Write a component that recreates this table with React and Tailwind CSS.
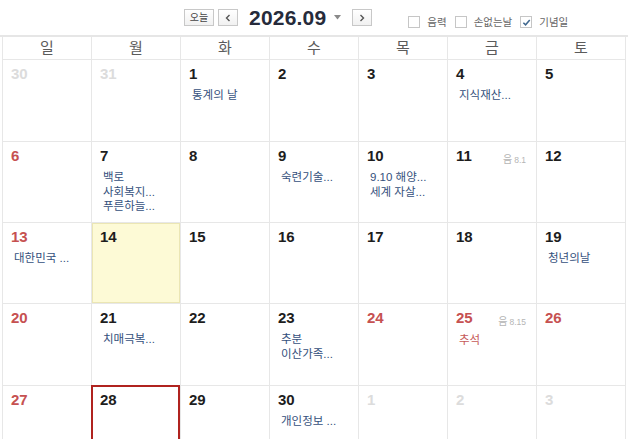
const weekdays = ['일', '월', '화', '수', '목', '금', '토'];

// o: other month, red: holiday/sunday, today, sel: selected
const weeks = [
  [
    { d: 30, o: true }, { d: 31, o: true }, { d: 1, ev: ['통계의 날'] }, { d: 2 },
    { d: 3 }, { d: 4, ev: ['지식재산...'] }, { d: 5 },
  ],
  [
    { d: 6, red: true }, { d: 7, ev: ['백로', '사회복지...', '푸른하늘...'] }, { d: 8 },
    { d: 9, ev: ['숙련기술...'] }, { d: 10, ev: ['9.10 해양...', '세계 자살...'] },
    { d: 11, lunar: '8.1' }, { d: 12 },
  ],
  [
    { d: 13, red: true, ev: ['대한민국 ...'] }, { d: 14, today: true }, { d: 15 }, { d: 16 },
    { d: 17 }, { d: 18 }, { d: 19, ev: ['청년의날'] },
  ],
  [
    { d: 20, red: true }, { d: 21, ev: ['치매극복...'] }, { d: 22 }, { d: 23, ev: ['추분', '이산가족...'] },
    { d: 24, red: true }, { d: 25, red: true, lunar: '8.15', ev: ['추석'], redEv: true }, { d: 26, red: true },
  ],
  [
    { d: 27, red: true }, { d: 28, sel: true }, { d: 29 }, { d: 30, ev: ['개인정보 ...'] },
    { d: 1, o: true }, { d: 2, o: true }, { d: 3, o: true },
  ],
];

const rowHeights = ['h-[82px]', 'h-[81px]', 'h-[81px]', 'h-[82px]', 'h-[82px]'];

function Checkbox({ label, checked }) {
  return (
    <label className="flex items-center gap-[7px]">
      <span className="w-[12px] h-[12px] border border-[#c6c6c6] bg-white flex items-center justify-center">
        {checked && (
          <svg width="9" height="9" viewBox="0 0 10 10">
            <path d="M1.5 5.2 L4 7.6 L8.6 2.2" fill="none" stroke="#40688f" strokeWidth="1.7" />
          </svg>
        )}
      </span>
      <span className="text-[10.5px] text-[#666] leading-none">{label}</span>
    </label>
  );
}

function DayCell({ cell, h }) {
  let num = 'text-[#1d1d1d]';
  if (cell.o) num = 'text-[#dcdcdc]';
  else if (cell.red) num = 'text-[#c65151]';

  return (
    <div
      className={`relative ${h} border-r border-b border-[#e7e7e7] pt-[5px] pl-[8px] pr-[10px] ${
        cell.today ? 'bg-[#fdfad6] shadow-[inset_0_0_0_1px_#ebe6b4]' : 'bg-white'
      }`}
    >
      {cell.sel && (
        <div className="absolute -left-px -top-px right-0 bottom-[-1px] border-2 border-[#b0231f]" />
      )}
      <div className="flex items-start justify-between">
        <span className={`text-[15px] leading-[18px] font-bold ${num}`}>{cell.d}</span>
        {cell.lunar && (
          <span className="mt-[3px] text-[#b5b5b5] leading-none">
            <span className="text-[10px]">음</span>
            <span className="text-[8.5px] ml-[2px]">{cell.lunar}</span>
          </span>
        )}
      </div>
      {cell.ev && (
        <div className="mt-[5px] pl-[3px]">
          {cell.ev.map((e, i) => (
            <div
              key={i}
              className={`text-[11.5px] leading-[14.5px] whitespace-nowrap ${
                cell.redEv ? 'text-[#c65a5a]' : 'text-[#34507c]'
              }`}
            >
              {e}
            </div>
          ))}
        </div>
      )}
    </div>
  );
}

export default function App() {
  return (
    <div className="w-[628px] h-[439px] overflow-hidden bg-white font-['Liberation_Sans','Noto_Sans_CJK_KR',sans-serif]">
      {/* Header */}
      <div className="h-[37px] border-b-2 border-[#e6e6e6] flex items-start pl-[184px] pt-[9px]">
        <button className="w-[30px] h-[17px] border border-[#c8c8c8] bg-gradient-to-b from-white to-[#f1f1f1] text-[10px] text-[#444] leading-none flex items-center justify-center">
          오늘
        </button>
        <button className="ml-[4px] w-[20px] h-[17px] border border-[#c8c8c8] bg-gradient-to-b from-white to-[#f1f1f1] flex items-center justify-center">
          <svg width="6" height="8" viewBox="0 0 6 8">
            <path d="M4.5 1 L1.5 4 L4.5 7" fill="none" stroke="#555" strokeWidth="1.4" />
          </svg>
        </button>
        <span className="ml-[11px] -mt-[3px] text-[21px] leading-[24px] font-bold text-[#262b3b] tracking-[0.2px]">
          2026.09
        </span>
        <svg className="ml-[8px] mt-[6px]" width="7" height="5" viewBox="0 0 7 5">
          <path d="M0 0 L7 0 L3.5 4.5 Z" fill="#8a8a8a" />
        </svg>
        <button className="ml-[11px] w-[20px] h-[17px] border border-[#c8c8c8] bg-gradient-to-b from-white to-[#f1f1f1] flex items-center justify-center">
          <svg width="6" height="8" viewBox="0 0 6 8">
            <path d="M1.5 1 L4.5 4 L1.5 7" fill="none" stroke="#555" strokeWidth="1.4" />
          </svg>
        </button>
        <div className="ml-[36px] mt-[7px] flex items-center gap-[8px]">
          <Checkbox label="음력" />
          <Checkbox label="손없는날" />
          <Checkbox label="기념일" checked />
        </div>
      </div>

      {/* Calendar */}
      <div className="ml-[2px] w-[624px] border-l border-[#e7e7e7]">
        <div className="grid grid-cols-7">
          {weekdays.map((w) => (
            <div
              key={w}
              className="h-[23px] border-r border-b border-[#e7e7e7] flex items-center justify-center text-[15px] text-[#5b5b5b]"
            >
              {w}
            </div>
          ))}
        </div>
        {weeks.map((week, wi) => (
          <div key={wi} className="grid grid-cols-7">
            {week.map((cell, ci) => (
              <DayCell key={ci} cell={cell} h={rowHeights[wi]} />
            ))}
          </div>
        ))}
      </div>
    </div>
  );
}
